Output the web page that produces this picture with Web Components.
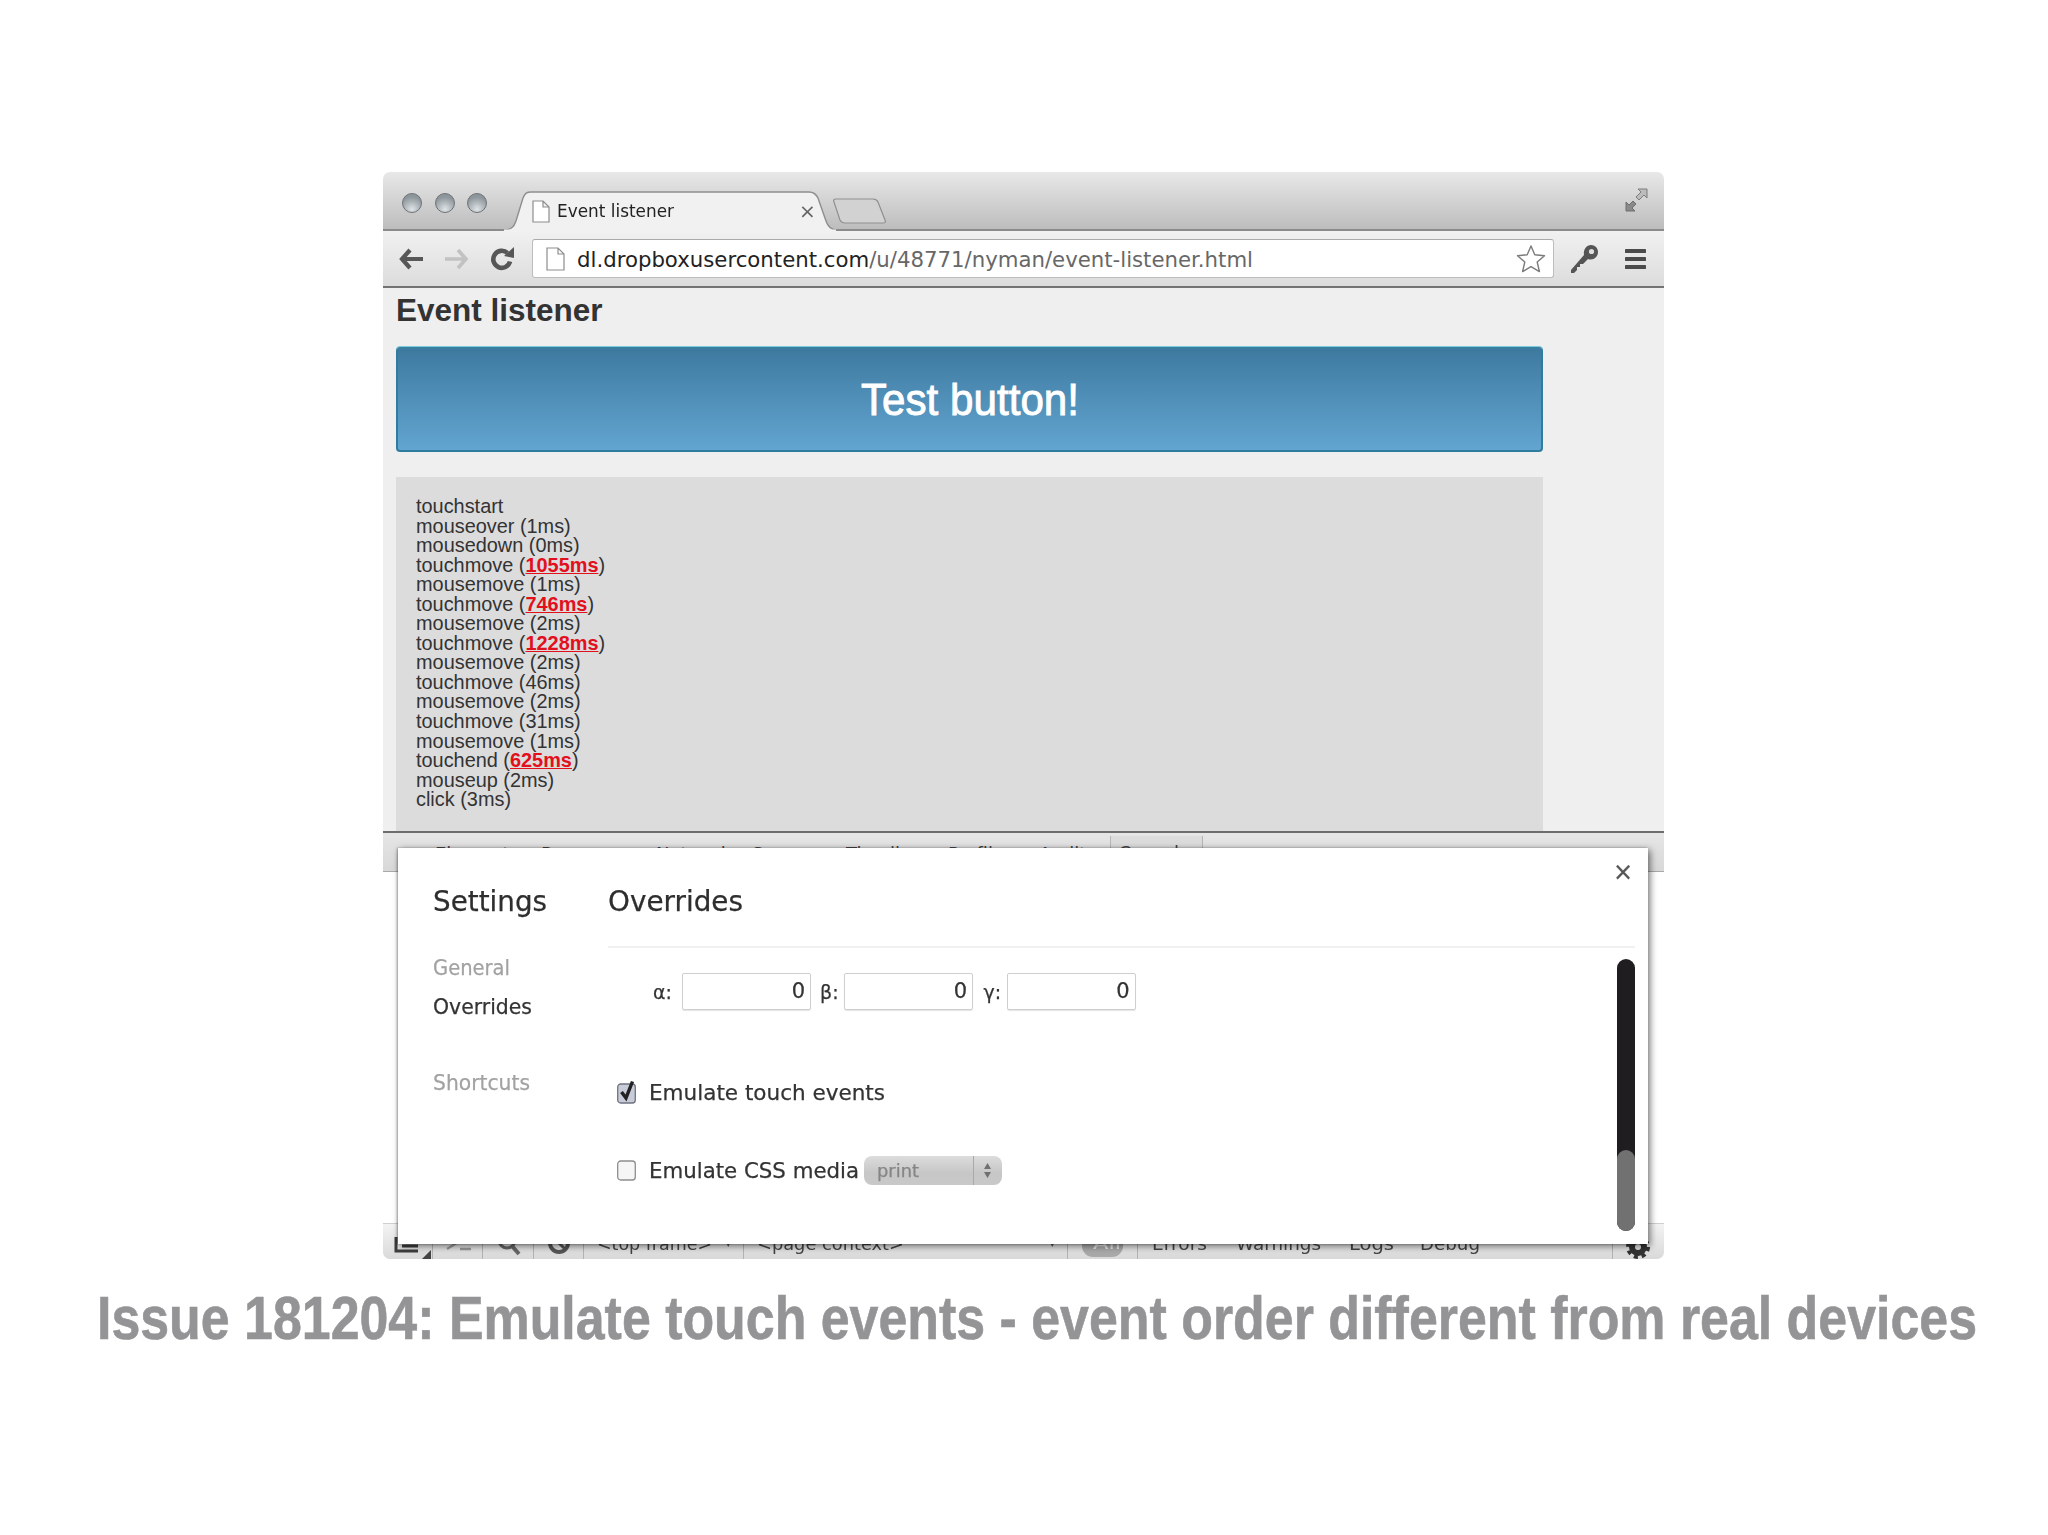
<!DOCTYPE html>
<html>
<head>
<meta charset="utf-8">
<title>Issue 181204</title>
<style>
  html, body { margin: 0; padding: 0; background: #fff; }
  body { width: 2048px; height: 1535px; overflow: hidden; font-family: "Liberation Sans", Arial, sans-serif; }
</style>
</head>
<body>
<slide-page>
  <browser-window>
    <tab-strip></tab-strip>
    <omni-bar></omni-bar>
    <event-page></event-page>
    <devtools-panel></devtools-panel>
    <settings-modal></settings-modal>
  </browser-window>
  <slide-caption>Issue 181204: Emulate touch events - event order different from real devices</slide-caption>
</slide-page>

<script>
// squeezes a line of text to a known width (the original fonts are narrower than what we have)
class FitText extends HTMLElement {
    constructor() {
        super();
        this.attachShadow({ mode: 'open' });
    }

    connectedCallback() {
        const w = this.getAttribute('w');
        const sy = this.getAttribute('sy') || 1;
        this.shadowRoot.innerHTML = `
            <style>
                :host { display: inline-block; width: ${w}px; white-space: nowrap; }
                span { display: inline-block; transform-origin: 0 50%; }
            </style>
            <span><slot></slot></span>
        `;
        const span = this.shadowRoot.querySelector('span');
        span.style.transform = `scale(${w / span.getBoundingClientRect().width}, ${sy})`;
    }
}

class SlidePage extends HTMLElement {
    constructor() {
        super();
        this.attachShadow({ mode: 'open' });
        this.shadowRoot.innerHTML = `
            <style>
                :host { display: flex; flex-direction: column; padding: 172px 0 0 0; }
            </style>
            <slot></slot>
        `;
    }
}

class BrowserWindow extends HTMLElement {
    constructor() {
        super();
        this.attachShadow({ mode: 'open' });
        this.shadowRoot.innerHTML = `
            <style>
                :host {
                    display: flex;
                    flex-direction: column;
                    position: relative;
                    width: 1281px;
                    height: 1087px;
                    margin-left: 383px;
                    filter: blur(0.7px);
                }
            </style>
            <slot></slot>
        `;
    }
}

class TabStrip extends HTMLElement {
    constructor() {
        super();
        this.attachShadow({ mode: 'open' });
        this.shadowRoot.innerHTML = `
            <style>
                :host {
                    display: flex;
                    align-items: flex-end;
                    height: 57px;
                    padding-left: 19px;
                    box-sizing: content-box;
                    background: linear-gradient(#e8e8e8, #bdbdbd);
                    border-bottom: 2px solid #8b8b8b;
                    border-radius: 7px 7px 0 0;
                    font-family: "DejaVu Sans", sans-serif;
                }
                .lights { display: flex; gap: 12.5px; align-self: flex-start; margin-top: 21px; }
                .lights i {
                    width: 20px;
                    height: 20px;
                    box-sizing: border-box;
                    border-radius: 50%;
                    border: 1px solid #6e7275;
                    background: radial-gradient(circle at 50% 85%, #dfe4e7, #8d969b 70%);
                }
                .tab {
                    position: relative;
                    width: 334px;
                    height: 40px;
                    margin: 0 0 -2px 16px;
                    flex: none;
                }
                .tab svg.bg { position: absolute; left: 0; top: 0; }
                .tab-row {
                    position: relative;
                    display: flex;
                    align-items: center;
                    height: 40px;
                    padding: 0 0 0 29px;
                    color: #222;
                    font-size: 17px;
                }
                .tab-row svg { margin-right: 7px; }
                .tab-row .x { margin-left: 125px; color: #666; font-size: 20px; line-height: 20px; }
                .newtab { flex: none; margin: 0 0 5px -4px; }
                .full { margin: 0 16px 0 auto; align-self: flex-start; padding-top: 16px; }
            </style>
            <div class="lights"><i></i><i></i><i></i></div>
            <div class="tab">
                <svg class="bg" width="334" height="40" viewBox="0 0 334 40">
                    <path d="M0 39 C8 39 11 36 13 30 L20 7 C22 2 24 1 28 1 L306 1 C311 1 313 3 315 7 L323 30 C325 36 328 39 334 39 L334 40 L0 40 Z" fill="#f1f1f1" stroke="#8e8e8e" stroke-width="1.4"/>
                    <path d="M1 40 L333 40" stroke="#f1f1f1" stroke-width="3"/>
                </svg>
                <div class="tab-row">
                    <svg width="18" height="23" viewBox="0 0 18 23"><path d="M1 1 H11 L17 7 V22 H1 Z M11 1 V7 H17" fill="#fff" stroke="#8d8d8d" stroke-width="1.2"/></svg>
                    <fit-text w="117">Event listener</fit-text>
                    <span class="x">×</span>
                </div>
            </div>
            <svg class="newtab" width="54" height="26" viewBox="0 0 54 26"><path d="M3 1 H40 C43 1 44 2 45 4 L52 22 C53 24 52 25 50 25 H12 C9 25 8 24 7 22 L1 4 C0 2 1 1 3 1 Z" fill="#d2d2d2" stroke="#8f8f8f" stroke-width="1.2"/></svg>
            <div class="full">
                <svg width="23" height="24" viewBox="0 0 23 24"><path d="M13 1 H22 V10 L19 7 L14 12 L11 9 L16 4 Z" fill="#bcbcbc" stroke="#7d7d7d" stroke-width="1"/><path d="M1 14 L4 17 L8 13 L11 16 L7 20 L10 23 H1 Z" fill="#8a8a8a" stroke="#6f6f6f" stroke-width="1"/></svg>
            </div>
        `;
    }
}

class OmniBar extends HTMLElement {
    constructor() {
        super();
        this.attachShadow({ mode: 'open' });
        this.shadowRoot.innerHTML = `
            <style>
                :host {
                    display: flex;
                    align-items: center;
                    height: 55px;
                    padding-left: 16px;
                    background: linear-gradient(#f1f1f1, #dcdcdc);
                    border-bottom: 2px solid #737373;
                    font-family: "DejaVu Sans", sans-serif;
                }
                svg { flex: none; display: block; }
                .box {
                    display: flex;
                    align-items: center;
                    flex: none;
                    box-sizing: border-box;
                    width: 1022px;
                    height: 39px;
                    margin: 0 16px 0 17px;
                    padding-left: 13px;
                    background: #fff;
                    border: 1px solid #bdbdbd;
                    border-top-color: #aaa;
                    border-radius: 3px;
                    font-size: 22px;
                    color: #676767;
                }
                .box b { font-weight: normal; color: #222; }
                .box fit-text { margin-left: 12px; padding-top: 1px; }
                .box .star { margin-left: auto; margin-right: 7px; }
            </style>
            <svg width="25" height="24" viewBox="0 0 25 24" style="margin-right:20px"><path d="M11 3 L3 12 L11 21 M3 12 H24" fill="none" stroke="#575757" stroke-width="4.2"/></svg>
            <svg width="26" height="24" viewBox="0 0 26 24" style="margin-right:20px"><path d="M14 3 L22 12 L14 21 M22 12 H1" fill="none" stroke="#c2c2c2" stroke-width="3.6"/></svg>
            <svg width="25" height="24" viewBox="0 0 25 24"><path d="M20 14.5 A8.5 8.5 0 1 1 17.5 6" fill="none" stroke="#565656" stroke-width="4.6"/><path d="M14 9 L24 11 L24 0 Z" fill="#565656"/></svg>
            <div class="box">
                <svg width="19" height="24" viewBox="0 0 19 24"><path d="M1 1 H12 L18 7 V23 H1 Z M12 1 V7 H18" fill="#fff" stroke="#8d8d8d" stroke-width="1.2"/></svg>
                <fit-text w="676"><b>dl.dropboxusercontent.com</b>/u/48771/nyman/event-listener.html</fit-text>
                <svg class="star" width="30" height="30" viewBox="0 0 30 30"><path d="M15 2 L18.8 10.8 L28.5 11.7 L21.2 18 L23.4 27.6 L15 22.6 L6.6 27.6 L8.8 18 L1.5 11.7 L11.2 10.8 Z" fill="#fff" stroke="#7b7b7b" stroke-width="1.4" stroke-linejoin="round"/></svg>
            </div>
            <svg width="29" height="30" viewBox="0 0 29 30" style="margin-right:26px"><path d="M1 26 L14 11 C13 5 17 1 21 1 C25 1 28 4 28 8 C28 13 23 17 18 15 L13 20 L10 20 L10 23 L7 23 L7 26 L4 29 L1 29 Z" fill="#555"/><circle cx="21.5" cy="7.5" r="2.6" fill="#dedede"/></svg>
            <svg width="21" height="22" viewBox="0 0 21 22"><path d="M1.5 3 H19.5 M1.5 11 H19.5 M1.5 19 H19.5" stroke="#4b4b4b" stroke-width="4.2" stroke-linecap="round"/></svg>
        `;
    }
}

class EventPage extends HTMLElement {
    constructor() {
        super();
        this.attachShadow({ mode: 'open' });
        this.shadowRoot.innerHTML = `
            <style>
                :host {
                    display: block;
                    height: 543px;
                    padding-left: 13px;
                    background: #efeff0;
                    font-family: "Liberation Sans", Arial, sans-serif;
                }
                h1 { margin: 0; height: 42px; font-size: 31.5px; line-height: 44px; font-weight: bold; color: #333; }
                .btn {
                    box-sizing: border-box;
                    width: 1147px;
                    height: 105px;
                    margin-top: 17px;
                    display: flex;
                    align-items: center;
                    justify-content: center;
                    background: linear-gradient(#3e7aa0, #62a5d1);
                    border: 2px solid #2f7d9e;
                    border-top-color: #3a7f9f;
                    box-shadow: 0 -1px 0 #7ecbdd;
                    border-radius: 4px;
                }
                .btn fit-text {
                    color: #fff;
                    font-size: 45px;
                    -webkit-text-stroke: 0.9px #fff;
                }
                .log {
                    box-sizing: border-box;
                    width: 1147px;
                    height: 354px;
                    margin-top: 25px;
                    padding: 20px 0 0 20px;
                    background: #dcdcdd;
                    color: #333;
                    font-size: 19.9px;
                    line-height: 19.55px;
                }
                .log b { color: #e2101c; text-decoration: underline; }
            </style>
            <h1>Event listener</h1>
            <div class="btn"><fit-text w="218">Test button!</fit-text></div>
            <div class="log">
                touchstart<br>
                mouseover (1ms)<br>
                mousedown (0ms)<br>
                touchmove (<b>1055ms</b>)<br>
                mousemove (1ms)<br>
                touchmove (<b>746ms</b>)<br>
                mousemove (2ms)<br>
                touchmove (<b>1228ms</b>)<br>
                mousemove (2ms)<br>
                touchmove (46ms)<br>
                mousemove (2ms)<br>
                touchmove (31ms)<br>
                mousemove (1ms)<br>
                touchend (<b>625ms</b>)<br>
                mouseup (2ms)<br>
                click (3ms)
            </div>
        `;
    }
}

class DevtoolsPanel extends HTMLElement {
    constructor() {
        super();
        this.attachShadow({ mode: 'open' });
        this.shadowRoot.innerHTML = `
            <style>
                :host {
                    display: flex;
                    flex-direction: column;
                    flex: 1;
                    background: #fff;
                    font-family: "DejaVu Sans", sans-serif;
                    color: #444;
                }
                .tabs {
                    display: flex;
                    height: 38px;
                    padding-left: 52px;
                    background: linear-gradient(#e6e6e7, #d8d8d9);
                    border-top: 2px solid #6d6d6d;
                    border-bottom: 1px solid #a9a9a9;
                    font-size: 18px;
                    line-height: 34px;
                }
                .tabs span { display: block; padding-top: 4px; flex: none; }
                .tabs .on {
                    width: 93px;
                    margin-top: 3px;
                    padding: 1px 0 0 8px;
                    line-height: 32px;
                    box-sizing: border-box;
                    background: #dcdcdd;
                    border-left: 1px solid #b5b5b5;
                    border-right: 1px solid #b5b5b5;
                }
                .main { flex: 1; }
                .status {
                    display: flex;
                    height: 35px;
                    background: linear-gradient(#f3f3f3, #d9d9d9);
                    border-top: 1px solid #cfcfcf;
                    border-radius: 0 0 7px 7px;
                    font-size: 18px;
                    line-height: 39px;
                }
                .cell { position: relative; flex: none; box-sizing: border-box; height: 35px; border-right: 1px solid #b3b3b3; }
                .cell svg { position: absolute; left: 0; top: 0; }
                .plain { flex: none; }
                .badge {
                    flex: none;
                    align-self: flex-start;
                    box-sizing: border-box;
                    width: 41px;
                    height: 26px;
                    margin: 7px 14px 0 14px;
                    background: #a9a9a9;
                    border-radius: 11px;
                    color: #e8e8e8;
                    font-size: 16px;
                    line-height: 26px;
                    text-align: center;
                }
                .arrow { position: absolute; right: 12px; top: 0; font-size: 11px; color: #555; }
            </style>
            <div class="tabs">
                <span style="width:106px">Elements</span>
                <span style="width:115px">Resources</span>
                <span style="width:96px">Network</span>
                <span style="width:94px">Sources</span>
                <span style="width:102px">Timeline</span>
                <span style="width:91px">Profiles</span>
                <span style="width:70.5px">Audits</span>
                <span class="on">Console</span>
            </div>
            <div class="main"></div>
            <div class="status">
                <div class="cell" style="width:50px">
                    <svg width="50" height="35" viewBox="0 0 50 35"><path d="M13 13 V27 H35 M19 22 H35" fill="none" stroke="#3d3d3d" stroke-width="3"/><path d="M48 26 V35 H39 Z" fill="#444"/></svg>
                </div>
                <div class="cell" style="width:50px">
                    <svg width="50" height="35" viewBox="0 0 50 35"><path d="M14 15 L22 20 L14 25 M27 25 H38" fill="none" stroke="#999" stroke-width="2.4"/></svg>
                </div>
                <div class="cell" style="width:51px">
                    <svg width="51" height="35" viewBox="0 0 51 35"><circle cx="24" cy="16" r="8" fill="none" stroke="#666" stroke-width="3"/><path d="M29 22 L36 30" stroke="#666" stroke-width="4"/></svg>
                </div>
                <div class="cell" style="width:50px">
                    <svg width="50" height="35" viewBox="0 0 50 35"><circle cx="25" cy="19" r="9" fill="none" stroke="#555" stroke-width="4"/><path d="M19 13 L31 25" stroke="#555" stroke-width="3"/></svg>
                </div>
                <div class="cell" style="width:160px;padding-left:13px"><fit-text w="115">&lt;top frame&gt;</fit-text><span class="arrow">▾</span></div>
                <div class="cell" style="width:324px;padding-left:13px"><fit-text w="147">&lt;page context&gt;</fit-text><span class="arrow">▾</span></div>
                <div class="badge"><fit-text w="28">All</fit-text></div>
                <div class="cell" style="width:1px"></div>
                <fit-text class="plain" w="55" style="margin-left:14px">Errors</fit-text>
                <fit-text class="plain" w="85" style="margin-left:29px">Warnings</fit-text>
                <fit-text class="plain" w="45" style="margin-left:28px">Logs</fit-text>
                <fit-text class="plain" w="60" style="margin-left:26px">Debug</fit-text>
                <div class="cell" style="width:1px;margin-left:132px"></div>
                <svg width="32" height="35" viewBox="0 0 32 35" style="flex:none;margin-left:9px"><circle cx="16" cy="23" r="6" fill="none" stroke="#333" stroke-width="6"/><circle cx="16" cy="23" r="10" fill="none" stroke="#333" stroke-width="4" stroke-dasharray="4 3.85"/></svg>
            </div>
        `;
    }
}

class SettingsModal extends HTMLElement {
    constructor() {
        super();
        this.attachShadow({ mode: 'open' });
        this.shadowRoot.innerHTML = `
            <style>
                :host {
                    display: grid;
                    grid-template-columns: 175px 1fr;
                    position: absolute;
                    left: 15px;
                    top: 676px;
                    width: 1250px;
                    height: 396px;
                    box-sizing: border-box;
                    padding: 0 0 0 35px;
                    background: #fff;
                    box-shadow: 2px 2px 7px rgba(0, 0, 0, .55), -1px 0 2px rgba(0, 0, 0, .3);
                    font-family: "DejaVu Sans", sans-serif;
                    color: #333;
                    -webkit-text-stroke: 0.25px currentColor;
                }
                h2 { margin: 0; height: 62px; padding-top: 36px; font-size: 28px; line-height: 36px; font-weight: normal; color: #2e2e2e; }
                nav { padding-top: 3px; font-size: 21px; color: #a2a2a2; }
                nav div { height: 39px; line-height: 39px; }
                nav .sel { color: #333; margin-bottom: 37px; }
                .head { width: 1027px; border-bottom: 2px solid #f0f0f0; }
                .angles {
                    display: flex;
                    align-items: center;
                    height: 37px;
                    margin: 25px 0 0 45px;
                    font-size: 21px;
                }
                .angles label { flex: none; font-size: 19px; }
                .field {
                    flex: none;
                    box-sizing: border-box;
                    width: 129px;
                    height: 37px;
                    padding-right: 5px;
                    border: 1px solid #cfcfcf;
                    border-radius: 2px;
                    box-shadow: 0 1px 1px #e4e4e4;
                    text-align: right;
                    line-height: 35px;
                }
                .opt { display: flex; align-items: center; height: 30px; margin-left: 9px; font-size: 22px; }
                .first { margin-top: 67px; }
                .second { margin-top: 48px; }
                .opt svg { flex: none; margin-right: 13px; }
                .select {
                    display: flex;
                    align-items: center;
                    flex: none;
                    box-sizing: border-box;
                    width: 138.5px;
                    height: 29px;
                    margin: 1px 0 0 4.5px;
                    padding-left: 13px;
                    background: linear-gradient(#dcdcdc, #c6c6c6 60%, #c9c9c9);
                    border-radius: 8px;
                    font-size: 17px;
                    color: #858585;
                }
                .select .sep { margin-left: auto; width: 1px; height: 29px; background: #a9a9a9; margin-right: 9px; }
                .select svg { margin-right: 10px; }
                .close { position: absolute; left: 1215px; top: 9px; width: 18px; font-size: 24px; line-height: 30px; text-align: center; color: #555; }
                .scroll {
                    position: absolute;
                    left: 1219px;
                    top: 111px;
                    width: 18px;
                    height: 272px;
                    border-radius: 9px;
                    overflow: hidden;
                    background: #1f1d20;
                }
                .scroll i { position: absolute; left: 0; right: 0; bottom: 0; height: 81px; background: #727172; border-radius: 9px 9px 0 0; }
            </style>
            <aside>
                <h2><fit-text w="114">Settings</fit-text></h2>
                <nav>
                    <div><fit-text w="77">General</fit-text></div>
                    <div class="sel"><fit-text w="99">Overrides</fit-text></div>
                    <div><fit-text w="97">Shortcuts</fit-text></div>
                </nav>
            </aside>
            <section>
                <h2 class="head"><fit-text w="135">Overrides</fit-text></h2>
                <div class="angles">
                    <label style="width:29px">α:</label><div class="field">0</div>
                    <label style="width:24px;margin-left:9px">β:</label><div class="field">0</div>
                    <label style="width:23px;margin-left:10.5px">γ:</label><div class="field">0</div>
                </div>
                <div class="opt first">
                    <svg width="19" height="24" viewBox="0 0 19 24"><rect x="0.7" y="4" width="17.6" height="19" rx="3" fill="#c8ccd8" stroke="#6f7280" stroke-width="1.3"/><path d="M4.5 12 L9 18 L15.5 1.5" fill="none" stroke="#222" stroke-width="3.4"/></svg>
                    <fit-text w="236">Emulate touch events</fit-text>
                </div>
                <div class="opt second">
                    <svg width="19" height="21" viewBox="0 0 19 21"><rect x="0.7" y="1" width="17.6" height="19" rx="3" fill="#f6f6f6" stroke="#8e8e8e" stroke-width="1.3"/></svg>
                    <fit-text w="210">Emulate CSS media</fit-text>
                    <div class="select">
                        <fit-text w="42">print</fit-text>
                        <span class="sep"></span>
                        <svg width="9" height="17" viewBox="0 0 9 17"><path d="M4.5 1 L8 7 H1 Z M4.5 16 L8 10 H1 Z" fill="#707070"/></svg>
                    </div>
                </div>
            </section>
            <div class="close">×</div>
            <div class="scroll"><i></i></div>
        `;
    }
}

class SlideCaption extends HTMLElement {
    constructor() {
        super();
        this.attachShadow({ mode: 'open' });
        this.shadowRoot.innerHTML = `
            <style>
                :host {
                    display: block;
                    margin-top: 25px;
                    padding-left: 97px;
                    height: 70px;
                    font-family: "Liberation Sans", Arial, sans-serif;
                    font-size: 48px;
                    line-height: 70px;
                    font-weight: bold;
                    color: #949496;
                    -webkit-text-stroke: 0.5px #949496;
                    filter: blur(0.4px);
                }
            </style>
            <fit-text w="1880" sy="1.27"><slot></slot></fit-text>
        `;
    }
}

customElements.define('fit-text', FitText);
customElements.define('slide-page', SlidePage);
customElements.define('browser-window', BrowserWindow);
customElements.define('tab-strip', TabStrip);
customElements.define('omni-bar', OmniBar);
customElements.define('event-page', EventPage);
customElements.define('devtools-panel', DevtoolsPanel);
customElements.define('settings-modal', SettingsModal);
customElements.define('slide-caption', SlideCaption);
</script>
</body>
</html>
